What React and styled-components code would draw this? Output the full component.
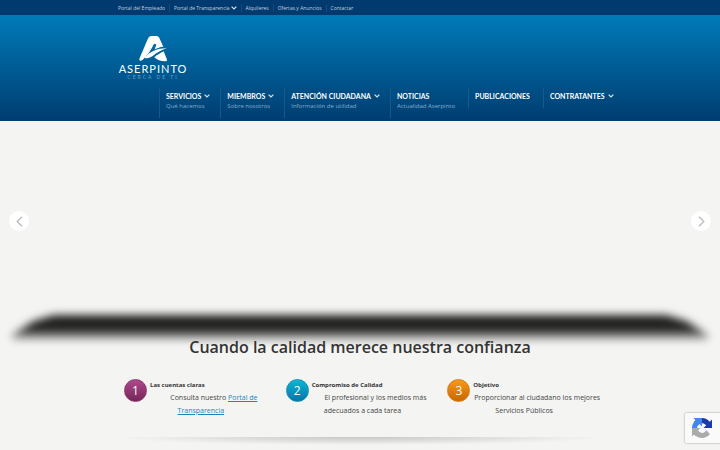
import React from "react";
import styled, { createGlobalStyle } from "styled-components";

const GlobalStyle = createGlobalStyle`
  * {
    box-sizing: border-box;
  }

  body {
    margin: 0;
    background-color: #f4f4f3;
    color: #444444;
    font-family: "Open Sans", "Noto Sans", sans-serif;
    overflow: hidden;
  }
`;

const StTopBar = styled.div`
  background-color: #003a6e;
  border-bottom: 1px solid #1d6ca3;
`;

const StContainer = styled.div`
  max-width: 484px;
  margin: 0 auto;
`;

const StTopNav = styled.nav`
  display: flex;
  align-items: center;
  height: 15px;
`;

const StTopLink = styled.a`
  display: flex;
  align-items: center;
  gap: 1px;
  padding: 0 4px;
  border-left: 1px solid #17497b;
  color: #c3d2e0;
  font-size: 5px;
  line-height: 8px;
  text-decoration: none;
  white-space: nowrap;

  &:first-child {
    padding-left: 0;
    border-left: none;
  }
`;

const StHeader = styled.header`
  height: 105px;
  padding-top: 19px;
  background: linear-gradient(#007ab8, #003d70);
`;

const StLogo = styled.a`
  display: block;
  width: 70px;
  color: #ffffff;
  text-align: center;
  text-decoration: none;
  white-space: nowrap;

  svg {
    display: block;
    margin: 0 auto;
  }

  strong {
    display: block;
    font-family: Lato, sans-serif;
    font-size: 11px;
    font-weight: 400;
    letter-spacing: 1px;
    line-height: 13px;
  }

  small {
    display: block;
    color: #5fa3cd;
    font-family: Lato, sans-serif;
    font-size: 5px;
    letter-spacing: 2px;
    line-height: 5px;
  }
`;

const StMainNav = styled.nav`
  display: flex;
  align-items: flex-start;
  margin: 8px 0 0 41px;
`;

const StMainLink = styled.a`
  display: block;
  padding: 3px ${(props) => (props.$arrow ? "10px" : "13px")} 7px 6px;
  border-left: 1px solid #1a588b;
  color: #86afce;
  font-size: 6px;
  line-height: 10px;
  text-decoration: none;
  white-space: nowrap;

  strong {
    display: flex;
    align-items: center;
    gap: 3px;
    color: #ffffff;
    font-family: Lato, sans-serif;
    font-size: 7px;
    font-weight: 700;
  }
`;

const StSlider = styled.section`
  display: flex;
  align-items: center;
  justify-content: space-between;
  height: 200px;
  padding: 0 9px;
`;

const StArrowButton = styled.button`
  display: flex;
  align-items: center;
  justify-content: center;
  width: 20px;
  height: 20px;
  padding: 0;
  border: none;
  border-radius: 50%;
  background-color: #ffffff;
  color: #bbbbbb;
  cursor: pointer;
`;

const StShadow = styled.div`
  height: 16px;
  margin: -6px 12px 0;
  filter: blur(4px);

  &::before {
    content: "";
    display: block;
    height: 25px;
    background: linear-gradient(#1f1f1d 55%, #1f1f1d30);
    clip-path: polygon(42px 0, calc(100% - 42px) 0, calc(100% - 22px) 6px, 100% 20px, 100% 100%, 0 100%, 0 20px, 22px 6px);
  }
`;

const StTitle = styled.h1`
  position: relative;
  margin: 5px 0 0;
  color: #333333;
  font-size: 16px;
  font-weight: 600;
  line-height: 22px;
  text-align: center;
`;

const StFeatures = styled.section`
  display: grid;
  grid-template-columns: repeat(3, 1fr);
  gap: 8px;
  padding: 21px 1px 0 6px;
`;

const StFeature = styled.article`
  h2 {
    margin: 0;
    color: #333333;
    font-size: 6px;
    font-weight: 700;
    line-height: 12px;
  }

  p {
    margin: 0;
    font-size: 7px;
    line-height: 13px;
    text-align: center;
  }

  a {
    color: #1a87b5;
  }
`;

const StNumber = styled.span`
  float: left;
  width: 23px;
  height: 23px;
  margin-right: 3px;
  border: 1px solid ${(props) => props.$edge};
  border-radius: 50%;
  background: linear-gradient(${(props) => props.$from}, ${(props) => props.$to});
  color: #ffffff;
  font-size: 12px;
  line-height: 22px;
  text-align: center;
`;

const StDivider = styled.div`
  height: 8px;
  margin-top: 20px;
  background: radial-gradient(50% 100% at 50% 0, #c6c6c5, #f4f4f300);
`;

const StCaptcha = styled.aside`
  position: fixed;
  right: 0;
  bottom: 7px;
  width: 35px;
  height: 30px;
  padding: 5px 0 0 7px;
  border-radius: 1px 0 0 1px;
  background-color: #fafafa;
  box-shadow: 0 0 2px #808080;
`;

const topLinks = [
  { label: "Portal del Empleado" },
  { label: "Portal de Transparencia", arrow: true },
  { label: "Alquileres" },
  { label: "Ofertas y Anuncios" },
  { label: "Contactar" }
];

const mainLinks = [
  { label: "SERVICIOS", sub: "Qué hacemos", arrow: true },
  { label: "MIEMBROS", sub: "Sobre nosotros", arrow: true },
  { label: "ATENCIÓN CIUDADANA", sub: "Información de utilidad", arrow: true },
  { label: "NOTICIAS", sub: "Actualidad Aserpinto" },
  { label: "PUBLICACIONES" },
  { label: "CONTRATANTES", arrow: true }
];

const features = [
  {
    title: "Las cuentas claras",
    text: (
      <>
        Consulta nuestro <a href="#transparencia">Portal de Transparencia</a>
      </>
    ),
    colors: ["#b0488c", "#742658", "#8a3a70"]
  },
  {
    title: "Compromiso de Calidad",
    text: "El profesional y los medios más adecuados a cada tarea",
    colors: ["#10b4d4", "#0077a8", "#1391b5"]
  },
  {
    title: "Objetivo",
    text: "Proporcionar al ciudadano los mejores Servicios Públicos",
    colors: ["#f79a1c", "#c96500", "#d67d14"]
  }
];

function Chevron() {
  return (
    <svg width="6" height="4" viewBox="0 0 6 4" fill="none" stroke="#d5e4f0" strokeWidth="1.2">
      <path d="M.6 .6 3 3 5.4 .6" />
    </svg>
  );
}

function LogoMark() {
  return (
    <svg width="28" height="27" viewBox="0 0 84 81" fill="#ffffff">
      <path d="M38 3H52C57 3 60 6 62 11L73 35C63 36 55 39 47 43L52 30C49 25 46 25 43 30C37 42 31 53 22 62C16 69 11 76 5 77C1 77 0 74 2 69L26 13C29 6 32 3 38 3Z" />
      <path d="M16 68C33 50 54 40 83 40C66 46 54 53 44 61C35 68 25 72 16 68Z" />
      <path d="M46 67C54 60 62 55 74 49L83 71C85 77 83 79 78 79C65 79 54 75 46 67Z" />
    </svg>
  );
}

function RecaptchaMark() {
  return (
    <svg width="20" height="20" viewBox="0 0 64 64">
      <path
        fill="#1c3aa9"
        d="M64 31.955l-.033-1.370V4.687l-7.160 7.160C50.948 4.674 42.033.093 32.050.093c-10.400 0-19.622 4.960-25.458 12.640l11.736 11.860a15.550 15.550 0 0 1 4.754-5.334c2.050-1.600 4.952-2.906 8.968-2.906.485 0 .860.057 1.135.163 4.976.393 9.288 3.140 11.828 7.124l-8.307 8.307L64 31.953"
      />
      <path
        fill="#4285f4"
        d="M31.862.094l-1.370.033H4.594l7.160 7.160C4.580 13.147 0 22.060 0 32.046c0 10.400 4.960 19.622 12.640 25.458L24.500 45.768a15.550 15.550 0 0 1-5.334-4.754c-1.600-2.050-2.906-4.952-2.906-8.968 0-.485.057-.860.163-1.135.393-4.976 3.140-9.288 7.124-11.828l8.307 8.307L31.860.095"
      />
      <path
        fill="#ababab"
        d="M.001 32.045l.033 1.370v25.898l7.160-7.160c5.860 7.173 14.774 11.754 24.760 11.754 10.400 0 19.622-4.960 25.458-12.640l-11.736-11.860a15.550 15.550 0 0 1-4.754 5.334c-2.050 1.600-4.952 2.906-8.968 2.906-.485 0-.860-.057-1.135-.163-4.976-.393-9.288-3.140-11.828-7.124l8.307-8.307c-10.522.040-22.400.066-27.295-.005"
      />
    </svg>
  );
}

function ArrowButton({ label, path }) {
  return (
    <StArrowButton type="button" aria-label={label}>
      <svg width="7" height="11" viewBox="0 0 7 11" fill="none" stroke="currentColor" strokeWidth="1.3">
        <path d={path} />
      </svg>
    </StArrowButton>
  );
}

function App() {
  return (
    <>
      <GlobalStyle />
      <StTopBar>
        <StContainer>
          <StTopNav>
            {topLinks.map((link) => (
              <StTopLink key={link.label} href="#">
                {link.label}
                {link.arrow && <Chevron />}
              </StTopLink>
            ))}
          </StTopNav>
        </StContainer>
      </StTopBar>
      <StHeader>
        <StContainer>
          <StLogo href="#">
            <LogoMark />
            <strong>ASERPINTO</strong>
            <small>CERCA DE TI</small>
          </StLogo>
          <StMainNav>
            {mainLinks.map((link) => (
              <StMainLink key={link.label} href="#" $arrow={link.arrow}>
                <strong>
                  {link.label}
                  {link.arrow && <Chevron />}
                </strong>
                {link.sub}
              </StMainLink>
            ))}
          </StMainNav>
        </StContainer>
      </StHeader>
      <main>
        <StSlider>
          <ArrowButton label="Anterior" path="M6 .8 1.2 5.5 6 10.2" />
          <ArrowButton label="Siguiente" path="M1 .8 5.8 5.5 1 10.2" />
        </StSlider>
        <StShadow />
        <StTitle>Cuando la calidad merece nuestra confianza</StTitle>
        <StContainer>
          <StFeatures>
            {features.map(({ title, text, colors }, index) => (
              <StFeature key={title}>
                <StNumber $from={colors[0]} $to={colors[1]} $edge={colors[2]}>
                  {index + 1}
                </StNumber>
                <h2>{title}</h2>
                <p>{text}</p>
              </StFeature>
            ))}
          </StFeatures>
          <StDivider />
        </StContainer>
      </main>
      <StCaptcha aria-label="reCAPTCHA">
        <RecaptchaMark />
      </StCaptcha>
    </>
  );
}

export default App;
